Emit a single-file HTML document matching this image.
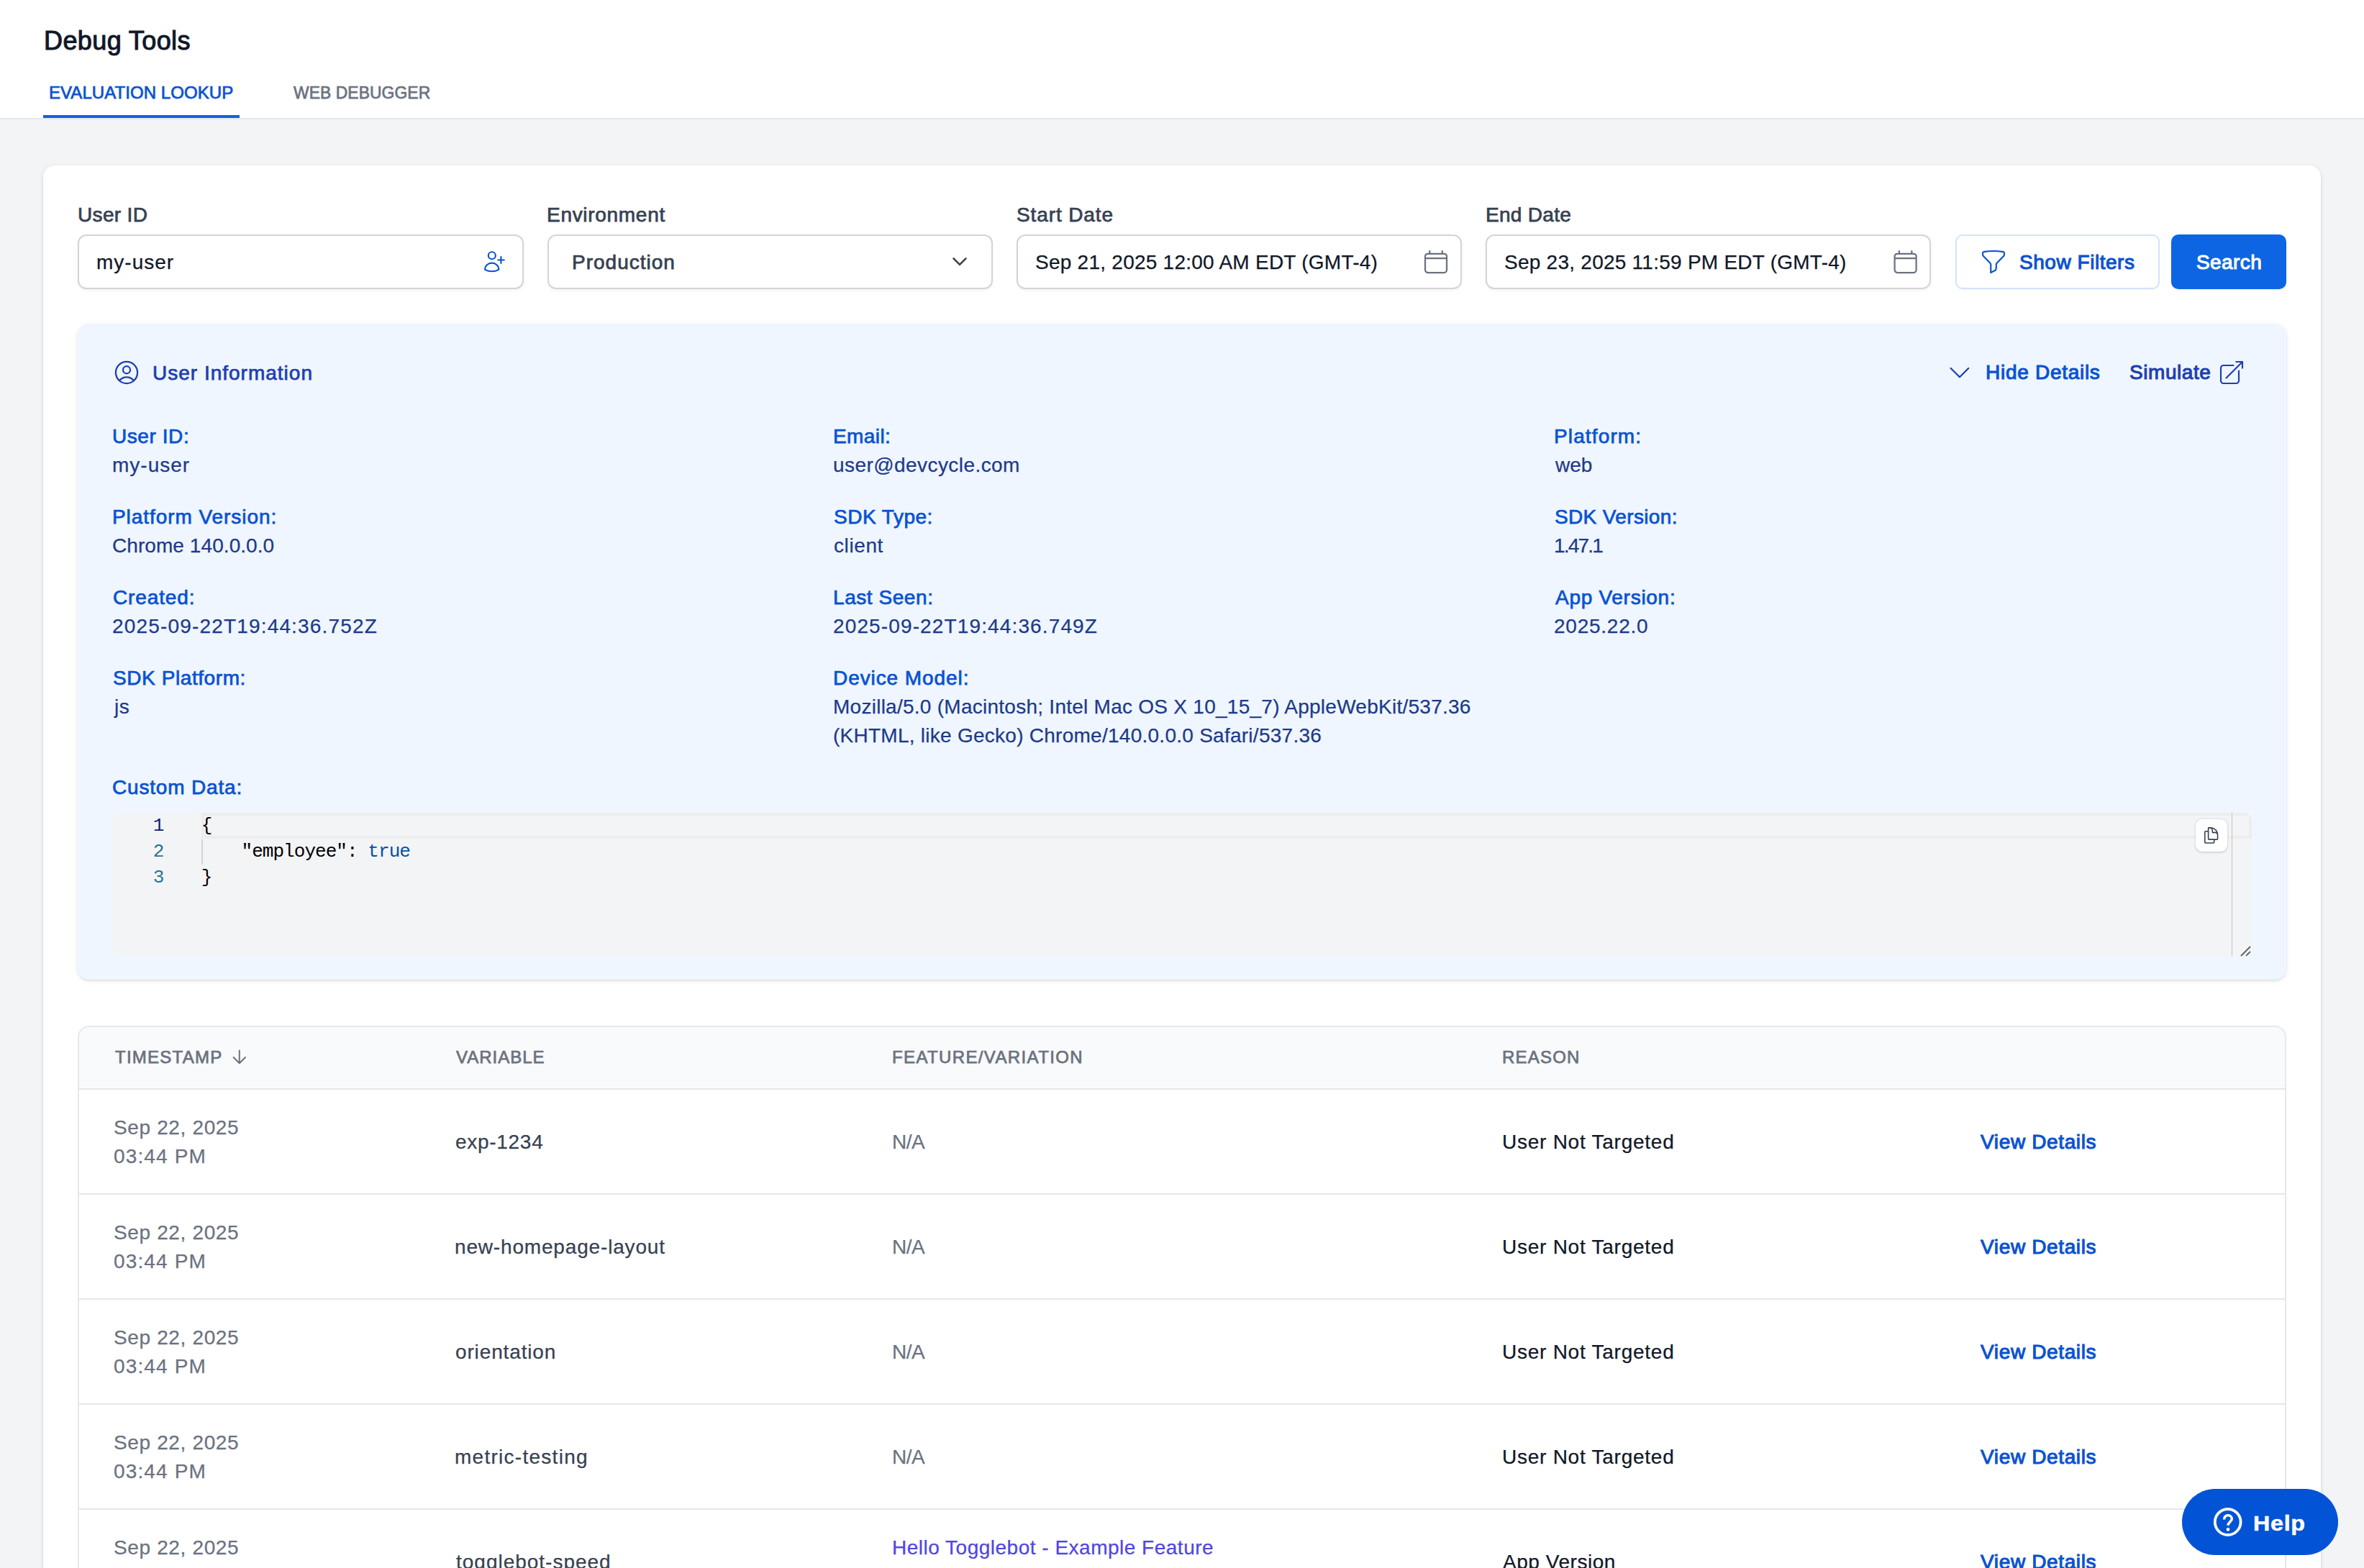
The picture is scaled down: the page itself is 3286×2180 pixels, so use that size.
<!DOCTYPE html>
<html>
<head>
<meta charset="utf-8">
<style>
*{box-sizing:border-box;margin:0;padding:0}
html,body{width:3286px;height:2180px;overflow:hidden;background:#f3f4f6;font-family:"Liberation Sans",sans-serif;position:relative}
.a{position:absolute;white-space:nowrap}
.b{position:absolute}
.mono{position:absolute;white-space:nowrap;font-family:"Liberation Mono",monospace;font-size:26px;line-height:36px;letter-spacing:-0.95px}
.inp{position:absolute;top:326px;height:76px;width:619.5px;border:2px solid #d1d5db;border-radius:12px;background:#fff;box-shadow:0 2px 4px rgba(0,0,0,.05)}
.sep{position:absolute;left:110px;width:3066px;height:2px;background:#e5e7eb}
</style>
</head>
<body>
<div class="b" style="left:0;top:0;width:3286px;height:164px;background:#fff"></div>
<div class="b" style="left:0;top:164px;width:3286px;height:2px;background:#e5e7eb"></div>
<div class="b" style="left:60px;top:160px;width:273px;height:4px;background:#0b63e5"></div>

<div class="b" style="left:60px;top:230px;width:3166px;height:2100px;background:#fff;border-radius:16px;box-shadow:0 2px 6px rgba(0,0,0,.1),0 2px 4px rgba(0,0,0,.06)"></div>

<div class="inp" style="left:108px"></div>
<div class="inp" style="left:760.5px"></div>
<div class="inp" style="left:1412.5px"></div>
<div class="inp" style="left:2064.5px"></div>
<div class="b" style="left:2717.5px;top:326px;width:284px;height:76px;border:2px solid #d3e3fb;border-radius:10px;background:#fff;box-shadow:0 1px 2px rgba(0,0,0,.05)"></div>
<div class="b" style="left:3018px;top:326px;width:160px;height:76px;background:#0d65e3;border-radius:10px;box-shadow:0 1px 2px rgba(0,0,0,.08)"></div>

<div class="b" style="left:108px;top:450px;width:3070px;height:912px;background:#eff6ff;border-radius:16px;box-shadow:0 2px 6px rgba(0,0,0,.1),0 2px 4px -2px rgba(0,0,0,.1)"></div>

<!-- editor -->
<div class="b" style="left:155px;top:1130px;width:2975px;height:200px;background:#f3f4f6;border-radius:12px;overflow:hidden">
  <div class="b" style="left:125px;top:0;width:2850px;height:36px;border:4px solid #ededed"></div>
  <div class="b" style="left:125px;top:37px;width:2px;height:35px;background:#d3d3d3"></div>
  <div class="b" style="left:2947px;top:0;width:1px;height:200px;background:#c4c4c4"></div>
  <div class="mono" style="left:56.5px;top:0;width:16px;text-align:right;color:#0b216f">1</div>
  <div class="mono" style="left:56.5px;top:36px;width:16px;text-align:right;color:#237893">2</div>
  <div class="mono" style="left:56.5px;top:72px;width:16px;text-align:right;color:#237893">3</div>
  <div class="mono" style="left:124.8px;top:0;color:#000">{</div>
  <div class="mono" style="left:180.5px;top:36px;color:#000">"employee": <span style="color:#0451a5">true</span></div>
  <div class="mono" style="left:124.8px;top:72px;color:#000">}</div>
  <svg class="b" style="left:2958px;top:184px" width="16" height="16" viewBox="0 0 16 16"><path d="M2 15L15 2M9 15L15 9" stroke="#666" stroke-width="2"/></svg>
</div>
<div class="b" style="left:3051.5px;top:1139.3px;width:44.8px;height:44.9px;background:#fff;border-radius:9px;box-shadow:0 0 0 1.5px rgba(17,24,39,.06),0 2px 3px rgba(0,0,0,.08)"></div>

<!-- table -->
<div class="b" style="left:108px;top:1426px;width:3070px;height:1000px;border:2px solid #e5e7eb;border-radius:16px;background:#fff;overflow:hidden">
  <div class="b" style="left:0;top:0;width:3066px;height:84px;background:#f9fafb"></div>
</div>
<div class="sep" style="top:1513px"></div>
<div class="sep" style="top:1659px"></div>
<div class="sep" style="top:1805px"></div>
<div class="sep" style="top:1951px"></div>
<div class="sep" style="top:2097px"></div>

<!-- help -->
<div class="b" style="left:3033px;top:2070px;width:217px;height:92px;border-radius:46px;background:#0353d6"></div>

<div id="h1" class="a" style="left:61.0px;top:34.4px;font-size:36px;line-height:45px;color:#111827;-webkit-text-stroke-width:1.05px;letter-spacing:0.40px;">Debug Tools</div>
<div id="tab1" class="a" style="left:68.0px;top:113.7px;font-size:24px;line-height:30px;color:#0a52d1;-webkit-text-stroke-width:0.75px;letter-spacing:0.06px;">EVALUATION LOOKUP</div>
<div id="tab2" class="a" style="left:408.0px;top:113.9px;font-size:24px;line-height:30px;color:#6b7280;-webkit-text-stroke-width:0.75px;transform:scaleX(0.95);transform-origin:0 0;letter-spacing:0.13px;">WEB DEBUGGER</div>
<div id="l1" class="a" style="left:108.0px;top:280.8px;font-size:28px;line-height:35px;color:#374151;-webkit-text-stroke-width:0.75px;letter-spacing:0.33px;">User ID</div>
<div id="l2" class="a" style="left:760.0px;top:280.8px;font-size:28px;line-height:35px;color:#374151;-webkit-text-stroke-width:0.75px;letter-spacing:0.70px;">Environment</div>
<div id="l3" class="a" style="left:1413.0px;top:280.8px;font-size:28px;line-height:35px;color:#374151;-webkit-text-stroke-width:0.75px;letter-spacing:0.89px;">Start Date</div>
<div id="l4" class="a" style="left:2065.0px;top:280.8px;font-size:28px;line-height:35px;color:#374151;-webkit-text-stroke-width:0.75px;letter-spacing:0.29px;">End Date</div>
<div id="i1" class="a" style="left:134.0px;top:346.8px;font-size:28px;line-height:35px;color:#111827;-webkit-text-stroke-width:0.25px;letter-spacing:1.00px;">my-user</div>
<div id="i2" class="a" style="left:795.0px;top:346.8px;font-size:28px;line-height:35px;color:#374151;-webkit-text-stroke-width:0.75px;letter-spacing:1.00px;">Production</div>
<div id="i3" class="a" style="left:1439.0px;top:346.8px;font-size:28px;line-height:35px;color:#111827;-webkit-text-stroke-width:0.25px;letter-spacing:0.25px;">Sep 21, 2025 12:00 AM EDT (GMT-4)</div>
<div id="i4" class="a" style="left:2091.0px;top:346.8px;font-size:28px;line-height:35px;color:#111827;-webkit-text-stroke-width:0.25px;letter-spacing:0.25px;">Sep 23, 2025 11:59 PM EDT (GMT-4)</div>
<div id="sf" class="a" style="left:2807.0px;top:346.8px;font-size:28px;line-height:35px;color:#0a52d1;-webkit-text-stroke-width:1.05px;letter-spacing:0.54px;">Show Filters</div>
<div id="sr" class="a" style="left:3053.0px;top:346.8px;font-size:28px;line-height:35px;color:#ffffff;-webkit-text-stroke-width:1.05px;letter-spacing:0.40px;">Search</div>
<div id="ui" class="a" style="left:212.0px;top:501.1px;font-size:28px;line-height:35px;color:#1e40af;-webkit-text-stroke-width:0.75px;letter-spacing:1.00px;">User Information</div>
<div id="hd" class="a" style="left:2760.0px;top:500.3px;font-size:28px;line-height:35px;color:#0a52d1;-webkit-text-stroke-width:1.05px;letter-spacing:0.72px;">Hide Details</div>
<div id="sim" class="a" style="left:2960.0px;top:500.3px;font-size:28px;line-height:35px;color:#1e40af;-webkit-text-stroke-width:1.05px;letter-spacing:0.57px;">Simulate</div>
<div id="k00" class="a" style="left:156.0px;top:588.8px;font-size:28px;line-height:35px;color:#0a52d1;-webkit-text-stroke-width:0.75px;letter-spacing:0.57px;">User ID:</div>
<div id="v00" class="a" style="left:156.0px;top:628.8px;font-size:28px;line-height:35px;color:#1e3a8a;-webkit-text-stroke-width:0.25px;letter-spacing:1.00px;">my-user</div>
<div id="k01" class="a" style="left:1158.0px;top:588.8px;font-size:28px;line-height:35px;color:#0a52d1;-webkit-text-stroke-width:0.75px;letter-spacing:0.40px;">Email:</div>
<div id="v01" class="a" style="left:1158.0px;top:628.8px;font-size:28px;line-height:35px;color:#1e3a8a;-webkit-text-stroke-width:0.25px;letter-spacing:0.43px;">user@devcycle.com</div>
<div id="k02" class="a" style="left:2160.0px;top:588.8px;font-size:28px;line-height:35px;color:#0a52d1;-webkit-text-stroke-width:0.75px;letter-spacing:1.13px;">Platform:</div>
<div id="v02" class="a" style="left:2162.0px;top:628.8px;font-size:28px;line-height:35px;color:#1e3a8a;-webkit-text-stroke-width:0.25px;">web</div>
<div id="k10" class="a" style="left:156.0px;top:700.8px;font-size:28px;line-height:35px;color:#0a52d1;-webkit-text-stroke-width:0.75px;letter-spacing:0.94px;">Platform Version:</div>
<div id="v10" class="a" style="left:156.0px;top:740.8px;font-size:28px;line-height:35px;color:#1e3a8a;-webkit-text-stroke-width:0.25px;letter-spacing:0.07px;">Chrome 140.0.0.0</div>
<div id="k11" class="a" style="left:1159.0px;top:700.8px;font-size:28px;line-height:35px;color:#0a52d1;-webkit-text-stroke-width:0.75px;letter-spacing:0.50px;">SDK Type:</div>
<div id="v11" class="a" style="left:1159.0px;top:740.8px;font-size:28px;line-height:35px;color:#1e3a8a;-webkit-text-stroke-width:0.25px;letter-spacing:0.60px;">client</div>
<div id="k12" class="a" style="left:2161.0px;top:700.8px;font-size:28px;line-height:35px;color:#0a52d1;-webkit-text-stroke-width:0.75px;letter-spacing:0.36px;">SDK Version:</div>
<div id="v12" class="a" style="left:2160.0px;top:740.8px;font-size:28px;line-height:35px;color:#1e3a8a;-webkit-text-stroke-width:0.25px;letter-spacing:-1.80px;">1.47.1</div>
<div id="k20" class="a" style="left:157.0px;top:812.8px;font-size:28px;line-height:35px;color:#0a52d1;-webkit-text-stroke-width:0.75px;letter-spacing:0.86px;">Created:</div>
<div id="v20" class="a" style="left:156.0px;top:852.8px;font-size:28px;line-height:35px;color:#1e3a8a;-webkit-text-stroke-width:0.25px;letter-spacing:1.17px;">2025-09-22T19:44:36.752Z</div>
<div id="k21" class="a" style="left:1158.0px;top:812.8px;font-size:28px;line-height:35px;color:#0a52d1;-webkit-text-stroke-width:0.75px;letter-spacing:0.56px;">Last Seen:</div>
<div id="v21" class="a" style="left:1158.0px;top:852.8px;font-size:28px;line-height:35px;color:#1e3a8a;-webkit-text-stroke-width:0.25px;letter-spacing:1.13px;">2025-09-22T19:44:36.749Z</div>
<div id="k22" class="a" style="left:2162.0px;top:812.8px;font-size:28px;line-height:35px;color:#0a52d1;-webkit-text-stroke-width:0.75px;letter-spacing:0.72px;">App Version:</div>
<div id="v22" class="a" style="left:2160.0px;top:852.8px;font-size:28px;line-height:35px;color:#1e3a8a;-webkit-text-stroke-width:0.25px;letter-spacing:0.75px;">2025.22.0</div>
<div id="k30" class="a" style="left:157.0px;top:924.8px;font-size:28px;line-height:35px;color:#0a52d1;-webkit-text-stroke-width:0.75px;letter-spacing:0.58px;">SDK Platform:</div>
<div id="v30" class="a" style="left:159.0px;top:964.8px;font-size:28px;line-height:35px;color:#1e3a8a;-webkit-text-stroke-width:0.25px;letter-spacing:0.64px;">js</div>
<div id="k31" class="a" style="left:1158.0px;top:924.8px;font-size:28px;line-height:35px;color:#0a52d1;-webkit-text-stroke-width:0.75px;letter-spacing:0.92px;">Device Model:</div>
<div id="v31" class="a" style="left:1158.0px;top:964.8px;font-size:28px;line-height:35px;color:#1e3a8a;-webkit-text-stroke-width:0.25px;letter-spacing:0.26px;">Mozilla/5.0 (Macintosh; Intel Mac OS X 10_15_7) AppleWebKit/537.36</div>
<div id="v31b" class="a" style="left:1158.0px;top:1004.8px;font-size:28px;line-height:35px;color:#1e3a8a;-webkit-text-stroke-width:0.25px;letter-spacing:0.26px;">(KHTML, like Gecko) Chrome/140.0.0.0 Safari/537.36</div>
<div id="cd" class="a" style="left:156.0px;top:1077.2px;font-size:28px;line-height:35px;color:#0a52d1;-webkit-text-stroke-width:0.75px;letter-spacing:0.82px;">Custom Data:</div>
<div id="th1" class="a" style="left:160.0px;top:1454.7px;font-size:24px;line-height:30px;color:#6b7280;-webkit-text-stroke-width:0.75px;letter-spacing:1.25px;">TIMESTAMP</div>
<div id="th2" class="a" style="left:634.0px;top:1454.7px;font-size:24px;line-height:30px;color:#6b7280;-webkit-text-stroke-width:0.75px;letter-spacing:1.00px;">VARIABLE</div>
<div id="th3" class="a" style="left:1240.0px;top:1454.7px;font-size:24px;line-height:30px;color:#6b7280;-webkit-text-stroke-width:0.75px;letter-spacing:1.37px;">FEATURE/VARIATION</div>
<div id="th4" class="a" style="left:2088.0px;top:1454.7px;font-size:24px;line-height:30px;color:#6b7280;-webkit-text-stroke-width:0.75px;letter-spacing:1.20px;">REASON</div>
<div id="d1_0" class="a" style="left:158.0px;top:1549.8px;font-size:28px;line-height:35px;color:#6b7280;-webkit-text-stroke-width:0.25px;letter-spacing:0.64px;">Sep 22, 2025</div>
<div id="d2_0" class="a" style="left:158.0px;top:1589.8px;font-size:28px;line-height:35px;color:#6b7280;-webkit-text-stroke-width:0.25px;letter-spacing:1.14px;">03:44 PM</div>
<div id="var0" class="a" style="left:633.0px;top:1569.8px;font-size:28px;line-height:35px;color:#374151;-webkit-text-stroke-width:0.25px;letter-spacing:0.71px;">exp-1234</div>
<div id="na0" class="a" style="left:1240.0px;top:1569.8px;font-size:28px;line-height:35px;color:#6b7280;-webkit-text-stroke-width:0.25px;letter-spacing:-0.50px;">N/A</div>
<div id="rs0" class="a" style="left:2088.0px;top:1569.8px;font-size:28px;line-height:35px;color:#111827;-webkit-text-stroke-width:0.25px;letter-spacing:0.75px;">User Not Targeted</div>
<div id="vd0" class="a" style="left:2753.0px;top:1569.8px;font-size:28px;line-height:35px;color:#0a52d1;-webkit-text-stroke-width:1.05px;letter-spacing:0.64px;">View Details</div>
<div id="d1_1" class="a" style="left:158.0px;top:1695.8px;font-size:28px;line-height:35px;color:#6b7280;-webkit-text-stroke-width:0.25px;letter-spacing:0.64px;">Sep 22, 2025</div>
<div id="d2_1" class="a" style="left:158.0px;top:1735.8px;font-size:28px;line-height:35px;color:#6b7280;-webkit-text-stroke-width:0.25px;letter-spacing:1.14px;">03:44 PM</div>
<div id="var1" class="a" style="left:632.0px;top:1715.8px;font-size:28px;line-height:35px;color:#374151;-webkit-text-stroke-width:0.25px;letter-spacing:0.83px;">new-homepage-layout</div>
<div id="na1" class="a" style="left:1240.0px;top:1715.8px;font-size:28px;line-height:35px;color:#6b7280;-webkit-text-stroke-width:0.25px;letter-spacing:-0.50px;">N/A</div>
<div id="rs1" class="a" style="left:2088.0px;top:1715.8px;font-size:28px;line-height:35px;color:#111827;-webkit-text-stroke-width:0.25px;letter-spacing:0.75px;">User Not Targeted</div>
<div id="vd1" class="a" style="left:2753.0px;top:1715.8px;font-size:28px;line-height:35px;color:#0a52d1;-webkit-text-stroke-width:1.05px;letter-spacing:0.64px;">View Details</div>
<div id="d1_2" class="a" style="left:158.0px;top:1841.8px;font-size:28px;line-height:35px;color:#6b7280;-webkit-text-stroke-width:0.25px;letter-spacing:0.64px;">Sep 22, 2025</div>
<div id="d2_2" class="a" style="left:158.0px;top:1881.8px;font-size:28px;line-height:35px;color:#6b7280;-webkit-text-stroke-width:0.25px;letter-spacing:1.14px;">03:44 PM</div>
<div id="var2" class="a" style="left:633.0px;top:1861.8px;font-size:28px;line-height:35px;color:#374151;-webkit-text-stroke-width:0.25px;letter-spacing:0.86px;">orientation</div>
<div id="na2" class="a" style="left:1240.0px;top:1861.8px;font-size:28px;line-height:35px;color:#6b7280;-webkit-text-stroke-width:0.25px;letter-spacing:-0.50px;">N/A</div>
<div id="rs2" class="a" style="left:2088.0px;top:1861.8px;font-size:28px;line-height:35px;color:#111827;-webkit-text-stroke-width:0.25px;letter-spacing:0.75px;">User Not Targeted</div>
<div id="vd2" class="a" style="left:2753.0px;top:1861.8px;font-size:28px;line-height:35px;color:#0a52d1;-webkit-text-stroke-width:1.05px;letter-spacing:0.64px;">View Details</div>
<div id="d1_3" class="a" style="left:158.0px;top:1987.8px;font-size:28px;line-height:35px;color:#6b7280;-webkit-text-stroke-width:0.25px;letter-spacing:0.64px;">Sep 22, 2025</div>
<div id="d2_3" class="a" style="left:158.0px;top:2027.8px;font-size:28px;line-height:35px;color:#6b7280;-webkit-text-stroke-width:0.25px;letter-spacing:1.14px;">03:44 PM</div>
<div id="var3" class="a" style="left:632.0px;top:2007.8px;font-size:28px;line-height:35px;color:#374151;-webkit-text-stroke-width:0.25px;letter-spacing:1.27px;">metric-testing</div>
<div id="na3" class="a" style="left:1240.0px;top:2007.8px;font-size:28px;line-height:35px;color:#6b7280;-webkit-text-stroke-width:0.25px;letter-spacing:-0.50px;">N/A</div>
<div id="rs3" class="a" style="left:2088.0px;top:2007.8px;font-size:28px;line-height:35px;color:#111827;-webkit-text-stroke-width:0.25px;letter-spacing:0.75px;">User Not Targeted</div>
<div id="vd3" class="a" style="left:2753.0px;top:2007.8px;font-size:28px;line-height:35px;color:#0a52d1;-webkit-text-stroke-width:1.05px;letter-spacing:0.64px;">View Details</div>
<div id="d1_4" class="a" style="left:158.0px;top:2133.8px;font-size:28px;line-height:35px;color:#6b7280;-webkit-text-stroke-width:0.25px;letter-spacing:0.64px;">Sep 22, 2025</div>
<div id="d2_4" class="a" style="left:157.7px;top:2173.8px;font-size:28px;line-height:35px;color:#6b7280;-webkit-text-stroke-width:0.25px;">03:44 PM</div>
<div id="var4" class="a" style="left:634.0px;top:2153.8px;font-size:28px;line-height:35px;color:#374151;-webkit-text-stroke-width:0.25px;letter-spacing:0.99px;">togglebot-speed</div>
<div id="ft4" class="a" style="left:1240.0px;top:2133.8px;font-size:28px;line-height:35px;color:#4f46e5;-webkit-text-stroke-width:0.25px;letter-spacing:0.50px;">Hello Togglebot - Example Feature</div>
<div id="fv4" class="a" style="left:1240.9px;top:2173.8px;font-size:28px;line-height:35px;color:#6b7280;-webkit-text-stroke-width:0.25px;letter-spacing:0.64px;">Variation A</div>
<div id="rs4" class="a" style="left:2089.0px;top:2153.8px;font-size:28px;line-height:35px;color:#111827;-webkit-text-stroke-width:0.25px;letter-spacing:0.54px;">App Version</div>
<div id="vd4" class="a" style="left:2753.0px;top:2153.8px;font-size:28px;line-height:35px;color:#0a52d1;-webkit-text-stroke-width:1.05px;letter-spacing:0.64px;">View Details</div>
<div id="help" class="a" style="left:3131.9px;top:2098.6px;font-size:30px;line-height:38px;color:#ffffff;font-weight:700;-webkit-text-stroke-width:0.5px;transform:scaleX(1.075);transform-origin:0 0;letter-spacing:0.67px;">Help</div>

<svg class="b" style="left:0;top:0;pointer-events:none" width="3286" height="2180" viewBox="0 0 3286 2180" fill="none" stroke-linecap="round" stroke-linejoin="round">
  <g stroke="#0a52d1" stroke-width="2.1">
    <circle cx="683.8" cy="355.3" r="5"/>
    <path transform="translate(669.6 347.5) scale(1.506 1.42)" vector-effect="non-scaling-stroke" d="M3 19.235v-.11a6.375 6.375 0 0112.75 0v.109A12.318 12.318 0 019.374 21c-2.331 0-4.512-.645-6.374-1.766z"/>
    <path d="M692.2 361.5H700.8M696.4 357V366"/>
  </g>
  <path d="M1325.5 359.3L1334 367.8L1342.5 359.3" stroke="#374151" stroke-width="2.6"/>
  <g transform="translate(1976 344) scale(1.667)" stroke="#6b7280" stroke-width="1.35">
    <path d="M6.75 3v2.25M17.25 3v2.25M3 18.75V7.5a2.25 2.25 0 012.25-2.25h13.5A2.25 2.25 0 0121 7.5v11.25a2.25 2.25 0 01-2.25 2.25H5.25A2.25 2.25 0 013 18.75zM3 9h18"/>
  </g>
  <g transform="translate(2628.6 344) scale(1.667)" stroke="#6b7280" stroke-width="1.35">
    <path d="M6.75 3v2.25M17.25 3v2.25M3 18.75V7.5a2.25 2.25 0 012.25-2.25h13.5A2.25 2.25 0 0121 7.5v11.25a2.25 2.25 0 01-2.25 2.25H5.25A2.25 2.25 0 013 18.75zM3 9h18"/>
  </g>
  <g transform="translate(2751 344) scale(1.667)" stroke="#0a52d1" stroke-width="1.3">
    <path d="M12 3c2.755 0 5.455.232 8.083.678.533.09.917.556.917 1.096v1.044a2.25 2.25 0 01-.659 1.591l-5.432 5.432a2.250 2.250 0 00-.659 1.591v2.927a2.25 2.25 0 01-1.244 2.013L9.75 21v-6.568a2.25 2.25 0 00-.659-1.591L3.659 7.409A2.25 2.25 0 013 5.818V4.774c0-.54.384-1.006.917-1.096A48.32 48.32 0 0112 3z"/>
  </g>
  <g transform="translate(155.9 497.9) scale(1.675)" stroke="#1e40af" stroke-width="1.35">
    <path d="M17.982 18.725A7.488 7.488 0 0012 15.75a7.488 7.488 0 00-5.982 2.975m11.963 0a9 9 0 10-11.963 0m11.963 0A8.966 8.966 0 0112 21a8.966 8.966 0 01-5.982-2.275M15 9.75a3 3 0 11-6 0 3 3 0 016 0z"/>
  </g>
  <path d="M2711.6 512L2724 524.2L2736.2 512" stroke="#1e40af" stroke-width="2.3"/>
  <g transform="translate(3082 498) scale(1.667)" stroke="#1e40af" stroke-width="1.3">
    <path d="M13.5 6H5.250A2.25 2.25 0 003 8.25v10.5A2.25 2.25 0 005.25 21h10.5A2.25 2.25 0 0018 18.75V10.5m-10.5 6L21 3m0 0h-5.25M21 3v5.25"/>
  </g>
  <g transform="translate(3060.7 1148.5) scale(1.08)" stroke="#374151" stroke-width="1.5">
    <path d="M15.75 17.25v3.375c0 .621-.504 1.125-1.125 1.125h-9.75a1.125 1.125 0 01-1.125-1.125V7.875c0-.621.504-1.125 1.125-1.125H6.75a9.06 9.06 0 011.5.124m7.5 10.376h3.375c.621 0 1.125-.504 1.125-1.125V11.25c0-4.46-3.243-8.161-7.5-8.876a9.06 9.06 0 00-1.5-.124H9.375c-.621 0-1.125.504-1.125 1.125v3.5m7.5 10.375H9.375a1.125 1.125 0 01-1.125-1.125v-9.25m12 6.625v-1.875a3.375 3.375 0 00-3.375-3.375h-1.5A1.125 1.125 0 0113.5 7.125v-1.5a3.375 3.375 0 00-3.375-3.375H8.25"/>
  </g>
  <g stroke="#6b7280" stroke-width="2">
    <path d="M332.8 1460.5V1478.2M324.6 1470L332.8 1478.2L341 1470"/>
  </g>
  <circle cx="3096.7" cy="2116.1" r="17.9" stroke="#fff" stroke-width="3.8"/>
  <path d="M3091.6 2112.5C3091.6 2109 3094 2106.8 3097 2106.8C3100 2106.8 3102.3 2108.9 3102.3 2111.8C3102.3 2115.2 3097 2116.5 3097 2120.8" stroke="#fff" stroke-width="3.6" stroke-linecap="butt"/>
  <circle cx="3097" cy="2126.4" r="2.3" fill="#fff"/>
</svg>
</body>
</html>
